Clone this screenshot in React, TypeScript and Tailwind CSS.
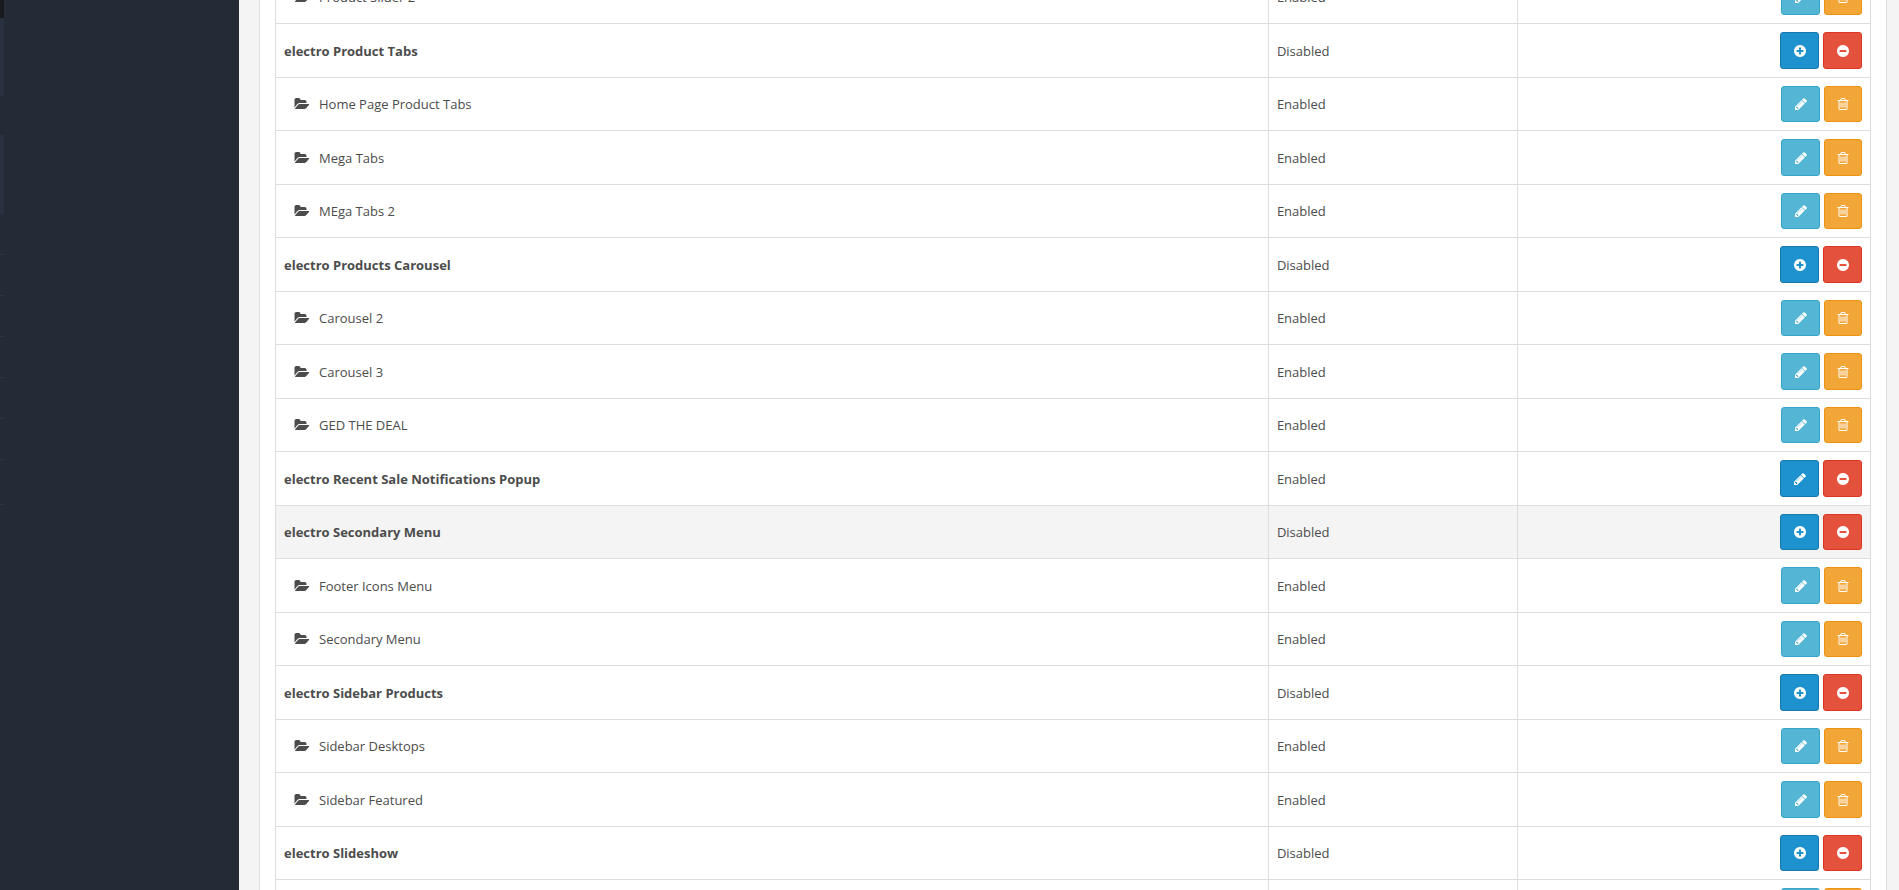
import clsx from 'clsx';

type IconName = 'pencil' | 'plus' | 'minus' | 'trash' | 'folder';

const RING =
  'zm320-64q0 209-103 385.5t-279.5 279.5-385.5 103-385.5-103-279.5-279.5-103-385.5 103-385.5 279.5-279.5 385.5-103 385.5 103 279.5 279.5 103 385.5z';

const ICONS: Record<IconName, string> = {
  pencil:
    'M491 1536l91-91-235-235-91 91v107h128v128h107zm523-928q0-22-22-22-10 0-17 7l-542 542q-7 7-7 17 0 22 22 22 10 0 17-7l542-542q7-7 7-17zm-54-192l416 416-832 832h-416v-416zm683 96q0 53-37 90l-166 166-416-416 166-165q36-38 90-38 53 0 91 38l235 234q37 39 37 91z',
  plus:
    'M1344 960v-128q0-26-19-45t-45-19h-256v-256q0-26-19-45t-45-19h-128q-26 0-45 19t-19 45v256h-256q-26 0-45 19t-19 45v128q0 26 19 45t45 19h256v256q0 26 19 45t45 19h128q26 0 45-19t19-45v-256h256q26 0 45-19t19-45' +
    RING,
  minus:
    'M1344 960v-128q0-26-19-45t-45-19h-768q-26 0-45 19t-19 45v128q0 26 19 45t45 19h768q26 0 45-19t19-45' +
    RING,
  trash:
    'M704 736v576q0 14-9 23t-23 9h-64q-14 0-23-9t-9-23v-576q0-14 9-23t23-9h64q14 0 23 9t9 23zm256 0v576q0 14-9 23t-23 9h-64q-14 0-23-9t-9-23v-576q0-14 9-23t23-9h64q14 0 23 9t9 23zm256 0v576q0 14-9 23t-23 9h-64q-14 0-23-9t-9-23v-576q0-14 9-23t23-9h64q14 0 23 9t9 23zm128 724v-948h-896v948q0 22 7 40.5t14.5 27 10.5 8.5h832q3 0 10.5-8.5t14.5-27 7-40.5zm-672-1076h448l-48-117q-7-9-17-11h-317q-10 2-17 11zm928 32v64q0 14-9 23t-23 9h-96v948q0 83-47 143.5t-113 60.5h-832q-66 0-113-58.5t-47-141.5v-952h-96q-14 0-23-9t-9-23v-64q0-14 9-23t23-9h309l70-167q15-37 54-63t79-26h320q40 0 79 26t54 63l70 167h309q14 0 23 9t9 23z',
  folder:
    'M1815 952q0 31-31 66l-336 396q-43 51-120.5 86.5t-143.5 35.5h-1088q-34 0-60.5-13t-26.5-43q0-31 31-66l336-396q43-51 120.5-86.5t143.5-35.5h1088q34 0 60.5 13t26.5 43zm-343-344v160h-832q-94 0-197 47.5t-164.5 119.5l-337 396-5 6q0-4-.5-12.5t-.5-12.5v-960q0-92 66-158t158-66h320q92 0 158 66t66 158v32h544q92 0 158 66t66 158z',
};

function Icon({ name, className }: { name: IconName; className?: string }) {
  return (
    <svg
      viewBox="0 0 1792 1792"
      className={clsx('shrink-0 overflow-visible fill-current', className)}
      aria-hidden="true"
    >
      <path d={ICONS[name]} />
    </svg>
  );
}

interface ModuleRow {
  name: string;
  enabled: boolean;
  /** Top level extension, as opposed to one of its instances */
  parent?: boolean;
  /** Parent without instances: edited in place instead of added to */
  single?: boolean;
  highlighted?: boolean;
}

const ROWS: ModuleRow[] = [
  { name: 'Product Slider 2', enabled: true },
  { name: 'electro Product Tabs', enabled: false, parent: true },
  { name: 'Home Page Product Tabs', enabled: true },
  { name: 'Mega Tabs', enabled: true },
  { name: 'MEga Tabs 2', enabled: true },
  { name: 'electro Products Carousel', enabled: false, parent: true },
  { name: 'Carousel 2', enabled: true },
  { name: 'Carousel 3', enabled: true },
  { name: 'GED THE DEAL', enabled: true },
  { name: 'electro Recent Sale Notifications Popup', enabled: true, parent: true, single: true },
  { name: 'electro Secondary Menu', enabled: false, parent: true, highlighted: true },
  { name: 'Footer Icons Menu', enabled: true },
  { name: 'Secondary Menu', enabled: true },
  { name: 'electro Sidebar Products', enabled: false, parent: true },
  { name: 'Sidebar Desktops', enabled: true },
  { name: 'Sidebar Featured', enabled: true },
  { name: 'electro Slideshow', enabled: false, parent: true },
  { name: 'Slideshow', enabled: true },
];

const TONES = {
  primary: 'w-[39px] bg-[#1e91cf] border-[#1978ab]',
  danger: 'w-[39px] bg-[#e4513d] border-[#dc3522]',
  info: 'w-[39px] bg-[#54b6d4] border-[#35a5c7]',
  warning: 'w-[38px] bg-[#f3a638] border-[#ee9311]',
};

function ActionButton({
  tone,
  icon,
  label,
}: {
  tone: keyof typeof TONES;
  icon: IconName;
  label: string;
}) {
  return (
    <button
      type="button"
      aria-label={label}
      className={clsx(
        'flex h-[37px] items-center justify-center rounded-[3px] border text-white group-odd:h-9',
        TONES[tone],
      )}
    >
      <Icon name={icon} className="size-[14px]" />
    </button>
  );
}

function Row({ row }: { row: ModuleRow }) {
  const cell = 'border border-[#ddd] px-2 py-0 align-middle';

  return (
    <tr
      className={clsx(
        'group h-[54px] odd:h-[53px]',
        row.highlighted && 'bg-[#f4f4f4]',
      )}
    >
      <td className={cell}>
        {row.parent ? (
          <b className="font-bold text-[#4c4c4c]">{row.name}</b>
        ) : (
          <span className="flex items-center gap-2.5 pl-[11px]">
            <Icon name="folder" className="size-[14px] text-[#4c4c4c]" />
            {row.name}
          </span>
        )}
      </td>
      <td className={cell}>{row.enabled ? 'Enabled' : 'Disabled'}</td>
      <td className={cell}>
        <div className="flex justify-end gap-1">
          {row.parent ? (
            <>
              <ActionButton
                tone="primary"
                icon={row.single ? 'pencil' : 'plus'}
                label={`${row.single ? 'Edit' : 'Install'} ${row.name}`}
              />
              <ActionButton tone="danger" icon="minus" label={`Uninstall ${row.name}`} />
            </>
          ) : (
            <>
              <ActionButton tone="info" icon="pencil" label={`Edit ${row.name}`} />
              <ActionButton tone="warning" icon="trash" label={`Delete ${row.name}`} />
            </>
          )}
        </div>
      </td>
    </tr>
  );
}

// Edge of the collapsed menu that stays visible along the left side
function MenuEdge() {
  return (
    <div className="flex w-1 flex-col" aria-hidden="true">
      <div className="h-[18px] bg-[#181a20]" />
      <div className="h-[78px] bg-[#293040]" />
      <div className="mt-[39px] h-[79px] bg-[#293040]" />
      <div className="h-[41px] border-b border-[#2d3640]" />
      <div className="h-[41px] border-b border-[#2d3640]" />
      <div className="h-[41px] border-b border-[#2d3640]" />
      <div className="h-[41px] border-b border-[#2d3640]" />
      <div className="h-[41px] border-b border-[#2d3640]" />
      <div className="h-[41px] border-b border-[#2d3640]" />
      <div className="h-[45px] border-b border-[#2d3640]" />
    </div>
  );
}

export default function App() {
  return (
    <div className="flex h-screen overflow-hidden bg-[#f4f4f4] font-['Open_Sans',sans-serif] text-[13px] leading-5 text-[#4c4c4c]">
      <nav className="w-[239px] shrink-0 bg-[#242b36]" aria-label="Main menu">
        <MenuEdge />
      </nav>
      <main className="min-w-0 flex-1 pr-3 pl-5">
        {/* the list is scrolled part way into its first row */}
        <div className="-mt-[30px] border-x border-[#dcdcdc] bg-white px-[15px]">
          <table className="w-full table-fixed border-collapse">
            <colgroup>
              <col className="w-[62.25%]" />
              <col className="w-[15.6%]" />
              <col />
            </colgroup>
            <tbody>
              {ROWS.map((row) => (
                <Row key={row.name} row={row} />
              ))}
            </tbody>
          </table>
        </div>
      </main>
    </div>
  );
}
